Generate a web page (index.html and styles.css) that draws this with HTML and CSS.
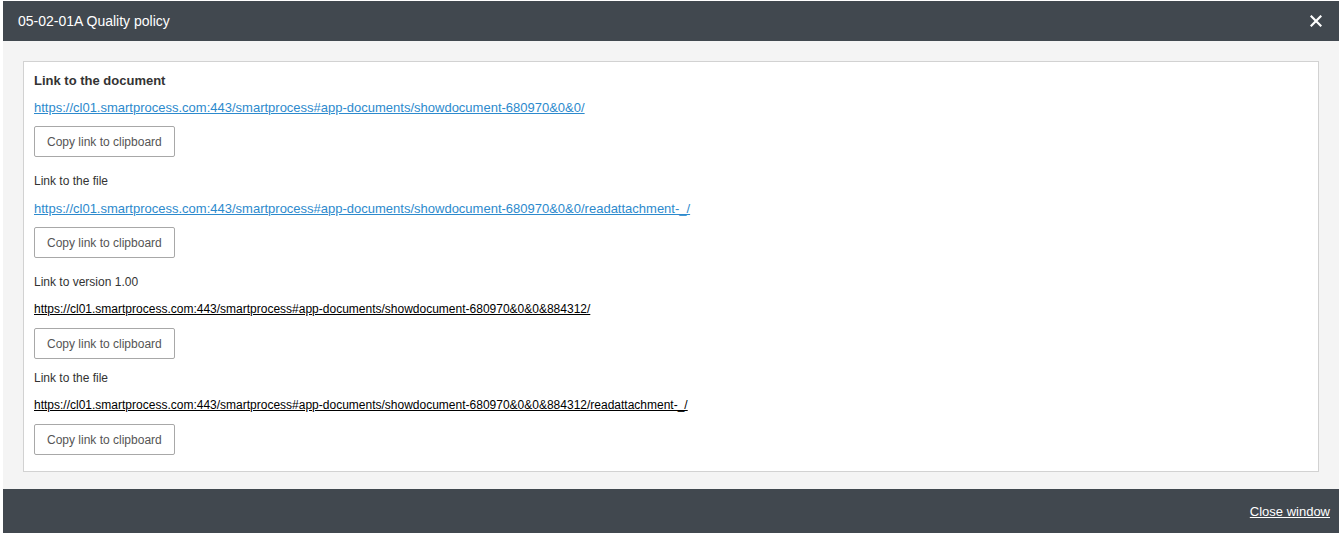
FILE: index.html
```html
<!DOCTYPE html>
<html lang="en">
<head>
    <meta charset="UTF-8">
    <meta name="viewport" content="width=device-width, initial-scale=1.0">
    <title>05-02-01A Quality policy</title>
    <link rel="stylesheet" href="styles.css">
</head>
<body>
    <div class="dialog">
        <div class="dialog-header">
            <h1 class="dialog-title">05-02-01A Quality policy</h1>
            <button class="dialog-close" type="button" aria-label="Close">
                <svg width="12" height="12" viewBox="0 0 12 12">
                    <path d="M1.5 1.5 L10.5 10.5 M10.5 1.5 L1.5 10.5" stroke="#fff" stroke-width="2.2" stroke-linecap="square"/>
                </svg>
            </button>
        </div>

        <div class="dialog-body">
            <div class="panel">
                <div class="link-block">
                    <h2 class="link-heading">Link to the document</h2>
                    <a class="link-url" href="#">https://cl01.smartprocess.com:443/smartprocess#app-documents/showdocument-680970&amp;0&amp;0/</a>
                    <button class="copy-btn" type="button">Copy link to clipboard</button>
                </div>

                <div class="link-block">
                    <div class="link-label">Link to the file</div>
                    <a class="link-url" href="#">https://cl01.smartprocess.com:443/smartprocess#app-documents/showdocument-680970&amp;0&amp;0/readattachment-_/</a>
                    <button class="copy-btn" type="button">Copy link to clipboard</button>
                </div>

                <div class="link-block">
                    <div class="link-label">Link to version 1.00</div>
                    <a class="link-url version" href="#">https://cl01.smartprocess.com:443/smartprocess#app-documents/showdocument-680970&amp;0&amp;0&amp;884312/</a>
                    <button class="copy-btn" type="button">Copy link to clipboard</button>
                </div>

                <div class="link-block tight">
                    <div class="link-label">Link to the file</div>
                    <a class="link-url version" href="#">https://cl01.smartprocess.com:443/smartprocess#app-documents/showdocument-680970&amp;0&amp;0&amp;884312/readattachment-_/</a>
                    <button class="copy-btn" type="button">Copy link to clipboard</button>
                </div>
            </div>
        </div>

        <div class="dialog-footer">
            <a class="footer-link" href="#">Close window</a>
        </div>
    </div>
</body>
</html>
```

FILE: styles.css
```css
* {
    box-sizing: border-box;
}

html, body {
    height: 100%;
}

body {
    margin: 0;
    padding: 1px 2px 2px 3px;
    background: #fff;
    font-family: "Liberation Sans", Arial, sans-serif;
    color: #333;
}

.dialog {
    height: 100%;
    display: flex;
    flex-direction: column;
    background: #f4f4f4;
}

.dialog-header {
    height: 40px;
    flex: none;
    display: flex;
    align-items: center;
    justify-content: space-between;
    background: #41484f;
    padding: 0 17px 0 15px;
}

.dialog-title {
    margin: 0;
    font-size: 14px;
    font-weight: normal;
    color: #fff;
}

.dialog-close {
    border: none;
    background: none;
    padding: 0;
    width: 12px;
    height: 12px;
    display: flex;
    cursor: pointer;
}

.dialog-body {
    flex: 1;
    padding: 20px 20px 17px 20px;
}

.panel {
    background: #fff;
    border: 1px solid #d2d2d2;
    padding: 10px 10px 16px 10px;
}

.link-block {
    margin-top: 15px;
}

.link-block:first-child {
    margin-top: 0;
}

.link-block.tight {
    margin-top: 10px;
}

.link-heading {
    margin: 0 0 9px 0;
    font-size: 13px;
    line-height: 18px;
    font-weight: bold;
    color: #333;
}

.link-label {
    font-size: 12px;
    line-height: 18px;
    margin-bottom: 10px;
    color: #333;
}

.link-url {
    display: block;
    font-size: 13px;
    line-height: 18px;
    color: #2d8acd;
    text-decoration: underline;
    margin-bottom: 9px;
}

.link-url.version {
    font-size: 12px;
    color: #000;
    margin-top: -1px;
    margin-bottom: 10px;
}

.copy-btn {
    display: block;
    width: 141px;
    height: 31px;
    padding: 0 12px;
    background: #fff;
    border: 1px solid #a8a8a8;
    border-radius: 2px;
    font-family: "Liberation Sans", Arial, sans-serif;
    font-size: 12px;
    color: #555;
    text-align: left;
    cursor: pointer;
}

.dialog-footer {
    height: 44px;
    flex: none;
    display: flex;
    align-items: center;
    justify-content: flex-end;
    background: #41484f;
    padding: 0 9px 0 0;
}

.footer-link {
    font-size: 13px;
    color: #fff;
    text-decoration: underline;
}
```
